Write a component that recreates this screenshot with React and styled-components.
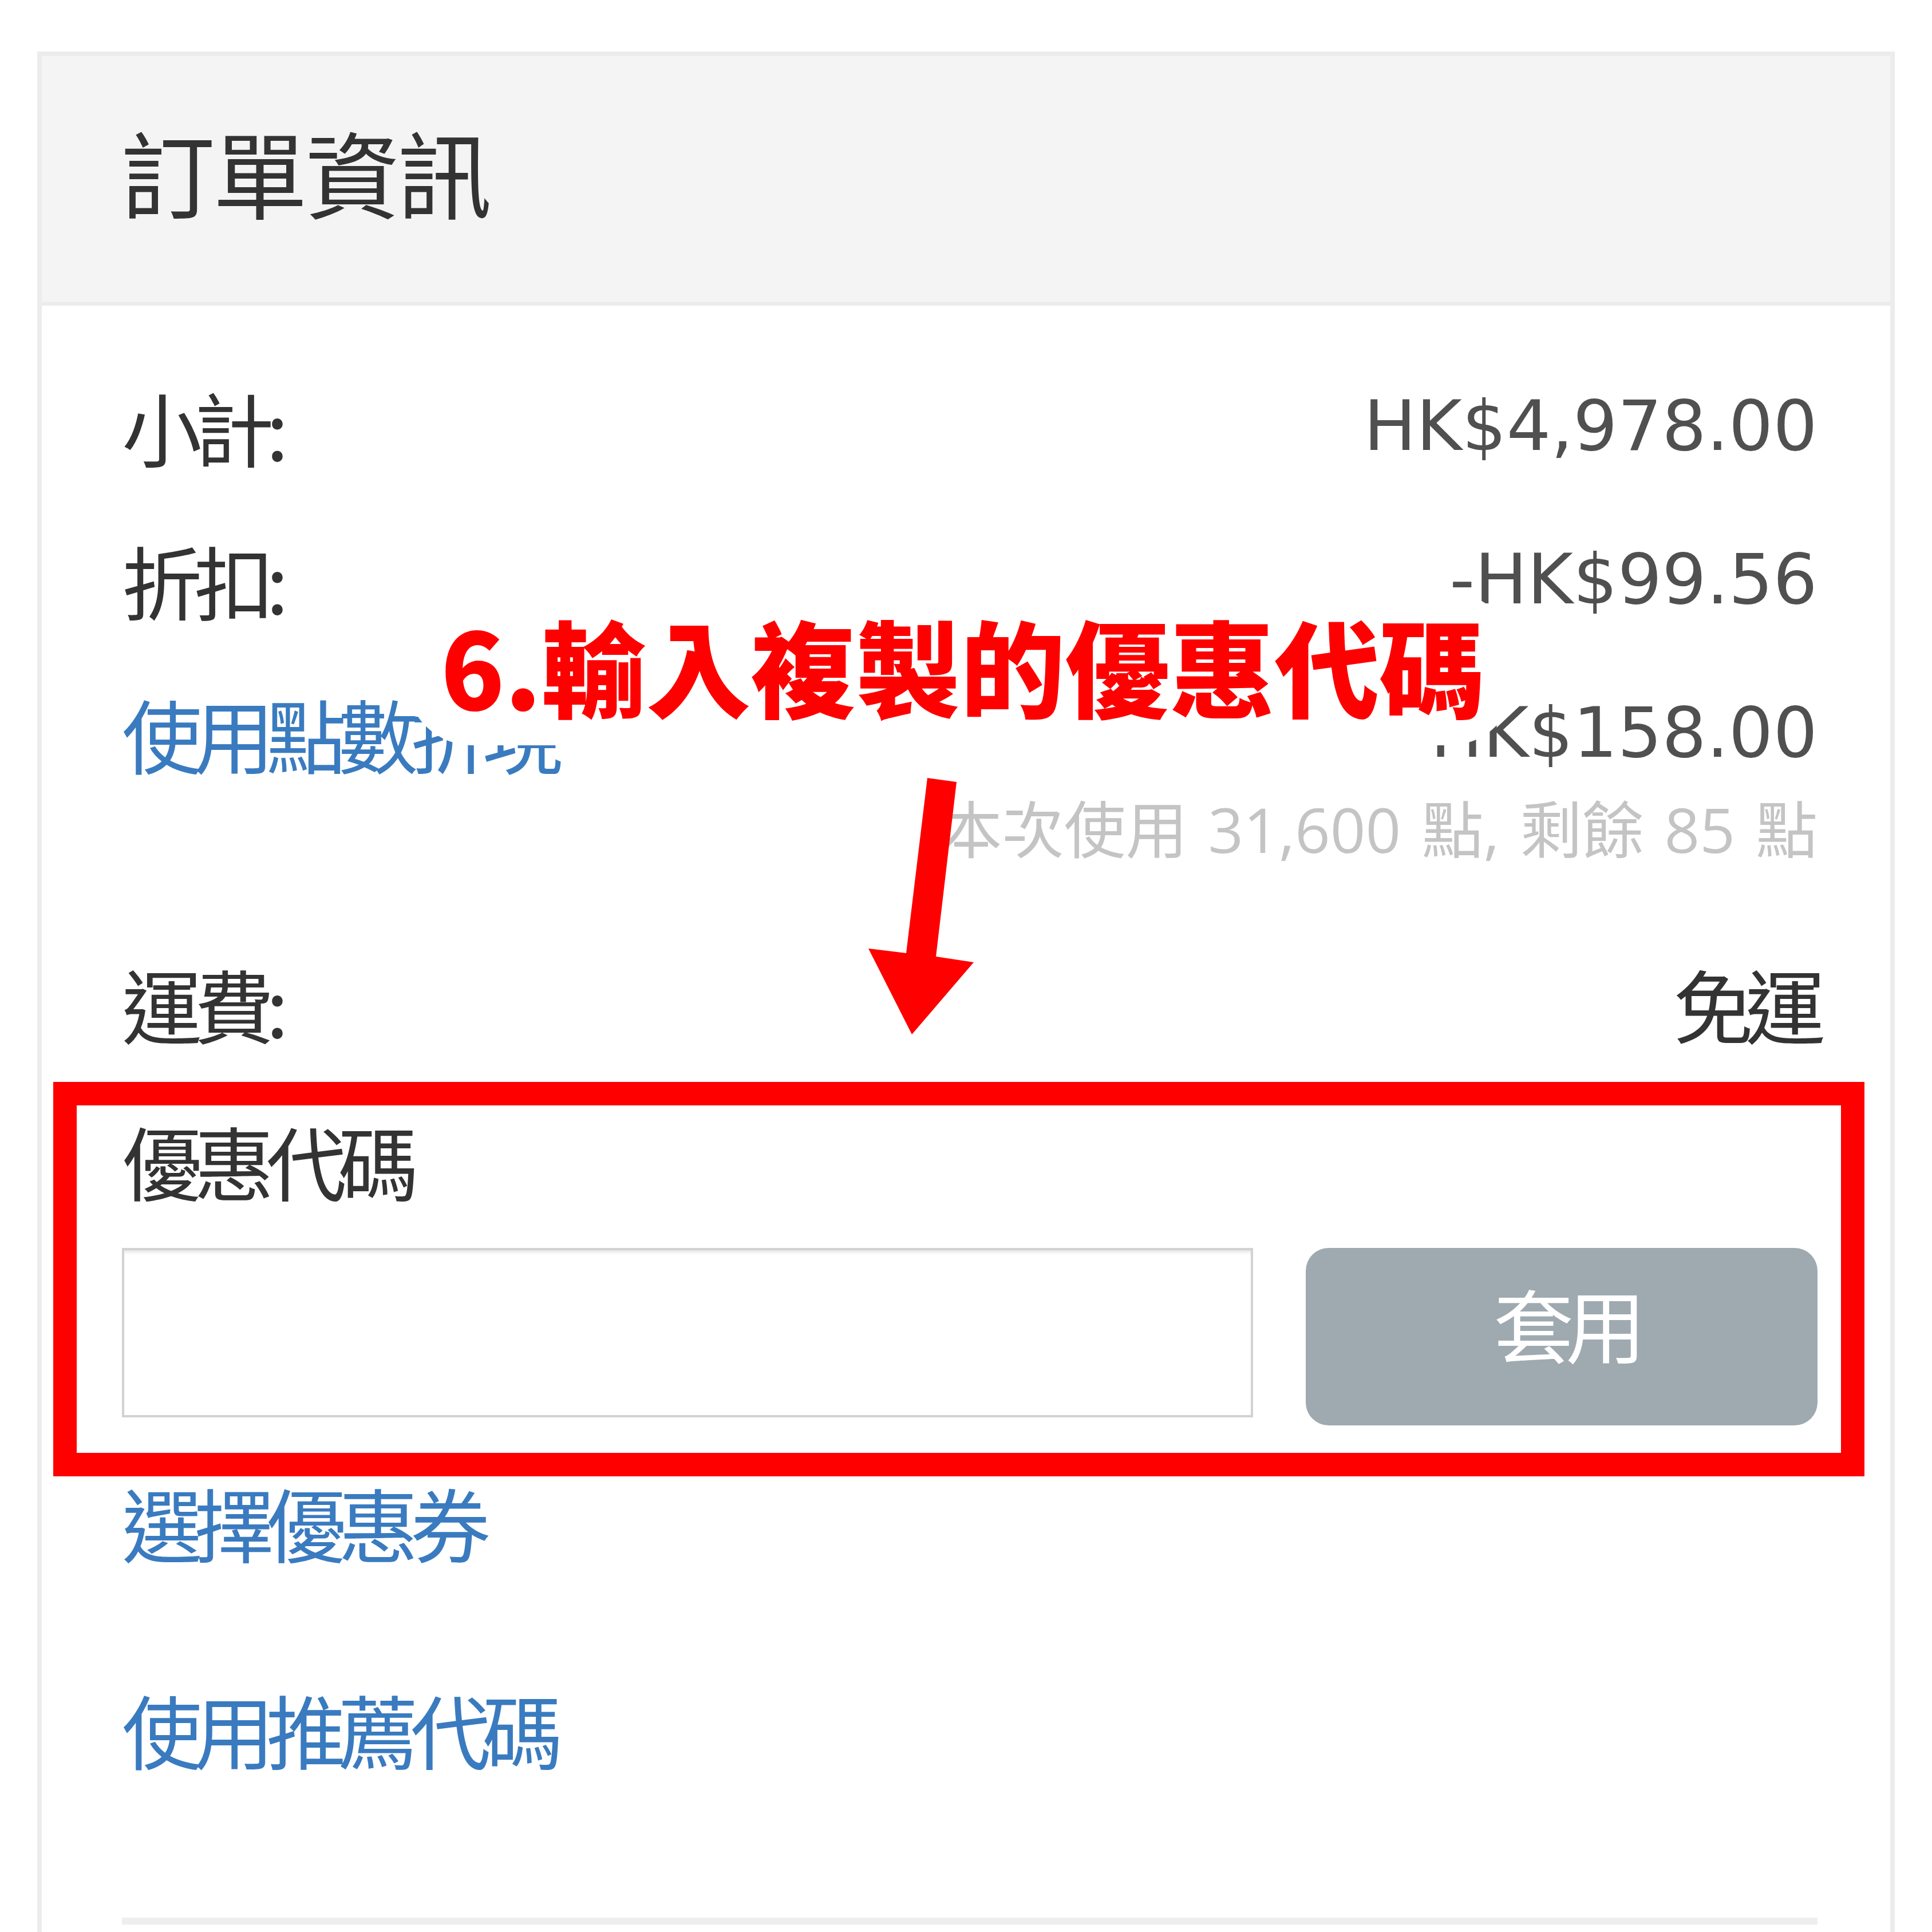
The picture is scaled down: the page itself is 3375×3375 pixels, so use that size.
import React from "react";
import styled, { createGlobalStyle } from "styled-components";

const GlobalStyle = createGlobalStyle`
  html, body {
    margin: 0;
    padding: 0;
    background: #ffffff;
  }
  body {
    font-family: "Noto Sans CJK TC", "Noto Sans", sans-serif;
  }
  * { box-sizing: border-box; }
`;

const Page = styled.div`
  position: relative;
  width: 3375px;
  height: 3375px;
  overflow: hidden;
  padding: 90px 0 0 65px;
  background: #ffffff;
`;

const Card = styled.section`
  width: 3245px;
  min-height: 3285px;
  border: 8px solid #ececec;
  border-bottom: none;
  background: #ffffff;
`;

const Header = styled.header`
  height: 436px;
  padding: 118px 0 0 138px;
  background: #f4f4f4;
  border-bottom: 7px solid #ececec;
`;

const Title = styled.h2`
  margin: 0;
  font-family: "Noto Sans CJK TC", sans-serif;
  font-weight: 400;
  font-size: 165px;
  line-height: 165px;
  letter-spacing: -4px;
  color: #333333;
`;

const Body = styled.div`
  padding: 76px 127px 0 140px;
`;

const Row = styled.div`
  display: flex;
  justify-content: space-between;
  align-items: center;
  height: ${(p) => p.$h}px;
  margin-top: ${(p) => p.$mt || 0}px;
`;

const Label = styled.span`
  display: block;
  font-family: "Noto Sans CJK TC", sans-serif;
  font-weight: 400;
  font-size: 140px;
  line-height: 140px;
  letter-spacing: -14px;
  color: ${(p) => (p.$link ? "#3a7bc0" : "#333333")};
  white-space: nowrap;
  margin-top: ${(p) => p.$mt || 0}px;
`;

const Amount = styled.span`
  font-family: "DejaVu Sans", "Noto Sans CJK TC", sans-serif;
  font-size: 122px;
  line-height: 122px;
  color: #505050;
  white-space: nowrap;
`;

const Note = styled.div`
  text-align: right;
  font-family: "Open Sans", "Noto Sans CJK TC", sans-serif;
  font-size: 108px;
  line-height: 70px;
  height: 70px;
  word-spacing: 8px;
  color: #c4c4c4;
  white-space: pre;
`;

const Coupon = styled.div`
  position: relative;
  padding-top: 70px;
`;

const InputRow = styled.div`
  display: grid;
  grid-template-columns: 1fr 894px;
  column-gap: 92px;
  align-items: start;
  margin-top: 84px;
`;

const CodeInput = styled.input`
  display: block;
  width: 100%;
  height: 296px;
  margin: 0;
  border: 4px solid #d2d2d2;
  border-radius: 0;
  background: #ffffff;
  box-shadow: inset 0 7px 6px -4px rgba(0, 0, 0, 0.12);
  outline: none;
`;

const ApplyButton = styled.button`
  height: 310px;
  margin: 0;
  padding: 0 0 50px 14px;
  border: none;
  border-radius: 40px;
  background: #9eaab0;
  color: #ffffff;
  font-family: "Noto Sans CJK TC", sans-serif;
  font-size: 140px;
  line-height: 140px;
  letter-spacing: -14px;
`;

const RedFrame = styled.div`
  position: absolute;
  top: 4px;
  left: -120px;
  width: 3164px;
  height: 689px;
  border: 41px solid #ff0000;
  pointer-events: none;
`;

const Divider = styled.div`
  margin-top: 261px;
  height: 12px;
  background: #eeeeee;
`;

const Callout = styled.div`
  position: absolute;
  left: 710px;
  top: 1035px;
  width: 1937px;
  height: 267px;
  padding: 0 0 16px 60px;
  display: flex;
  align-items: center;
  border-radius: 115px;
  background: #ffffff;
  font-family: "Noto Sans CJK TC", sans-serif;
  font-weight: 900;
  font-size: 183px;
  line-height: 183px;
  color: #ff0000;
  white-space: nowrap;
`;

const Arrow = styled.svg`
  position: absolute;
  left: 1500px;
  top: 1340px;
  width: 220px;
  height: 480px;
`;

export default function App() {
  return (
    <>
      <GlobalStyle />
      <Page>
        <Card>
          <Header>
            <Title>訂單資訊</Title>
          </Header>
          <Body>
            <Row $h={268}>
              <Label>小計:</Label>
              <Amount>HK$4,978.00</Amount>
            </Row>
            <Row $h={268}>
              <Label>折扣:</Label>
              <Amount>-HK$99.56</Amount>
            </Row>
            <Row $h={268}>
              <Label $link>使用點數折現</Label>
              <Amount>-HK$158.00</Amount>
            </Row>
            <Note>本次使用 31,600 點, 剩餘 85 點</Note>
            <Row $h={268} $mt={134}>
              <Label>運費:</Label>
              <Label>免運</Label>
            </Row>
            <Coupon>
              <Label>優惠代碼</Label>
              <InputRow>
                <CodeInput type="text" aria-label="優惠代碼" />
                <ApplyButton type="button">套用</ApplyButton>
              </InputRow>
              <RedFrame />
            </Coupon>
            <Label $link $mt={98}>選擇優惠券</Label>
            <Label $link $mt={221}>使用推薦代碼</Label>
            <Divider />
          </Body>
        </Card>
        <Callout>6.輸入複製的優惠代碼</Callout>
        <Arrow viewBox="0 0 220 480">
          <polygon
            points="120,19 171,26 135,331 201,341 93,467 17,317 83,325"
            fill="#ff0000"
          />
        </Arrow>
      </Page>
    </>
  );
}
